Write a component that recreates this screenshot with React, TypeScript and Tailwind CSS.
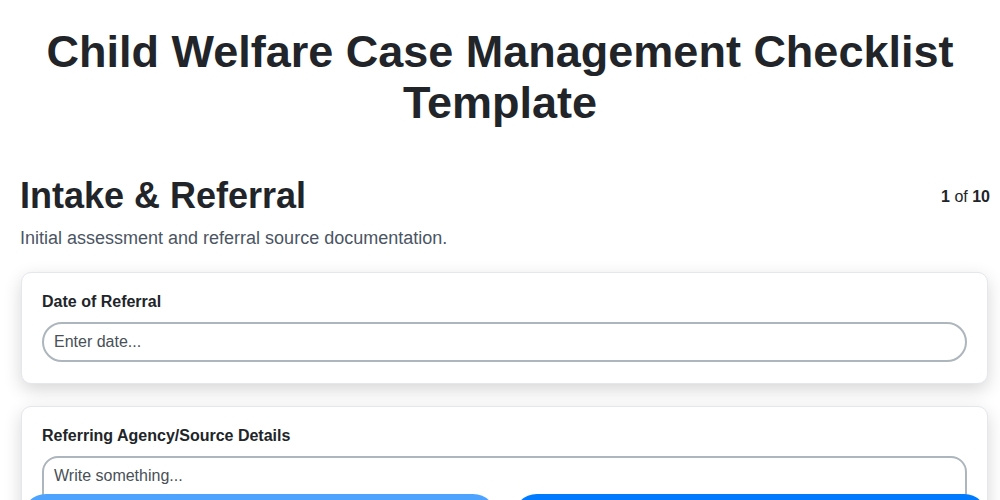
import React from "react";

const Field: React.FC<{ label: string; children: React.ReactNode }> = ({ label, children }) => (
  <div className="rounded-[10px] border border-[#e5e7eb] bg-white px-5 pt-[17px] pb-[21px] shadow-[0_6px_18px_rgba(0,0,0,0.16)]">
    <div className="mb-2 text-[16px] font-bold leading-6 text-[#212529]">{label}</div>
    {children}
  </div>
);

export default function App() {
  return (
    <div className="min-h-screen bg-white font-['Liberation_Sans',Arial,sans-serif] text-[#212529]">
      <h1 className="px-5 pt-[26px] text-center text-[45px] font-bold leading-[51px]">
        Child Welfare Case Management Checklist Template
      </h1>

      <div className="mt-[46px] flex items-start justify-between pl-5 pr-[10px]">
        <h2 className="text-[36px] font-bold leading-[1.2]">Intake &amp; Referral</h2>
        <div className="mt-[11px] text-[16px] leading-6">
          <span className="font-bold">1</span> of <span className="font-bold">10</span>
        </div>
      </div>
      <p className="mt-[9px] pl-5 text-[18px] leading-6 text-[#4b5563]">
        Initial assessment and referral source documentation.
      </p>

      <div className="mt-[22px] flex flex-col gap-[22px] pl-[21px] pr-[12px] pb-24">
        <Field label="Date of Referral">
          <input
            className="block h-10 w-full rounded-full border-2 border-[#adb5bd] bg-white px-[10px] text-[16px] text-[#495057] outline-none placeholder:text-[#495057]"
            placeholder="Enter date..."
          />
        </Field>
        <Field label="Referring Agency/Source Details">
          <textarea
            className="block h-[120px] w-full resize-none rounded-[16px] border-2 border-[#adb5bd] bg-white px-[10px] py-[6px] text-[16px] leading-6 text-[#495057] outline-none placeholder:text-[#495057]"
            placeholder="Write something..."
          />
        </Field>
      </div>

      <div className="fixed left-0 right-0 top-[494px] flex gap-4 pl-[22px] pr-[12px]">
        <button className="h-12 flex-1 rounded-full bg-[#4da3ff] text-[16px] font-bold text-white">
          Previous
        </button>
        <button className="h-12 flex-1 rounded-full bg-[#007bff] text-[16px] font-bold text-white">
          Next
        </button>
      </div>
    </div>
  );
}
